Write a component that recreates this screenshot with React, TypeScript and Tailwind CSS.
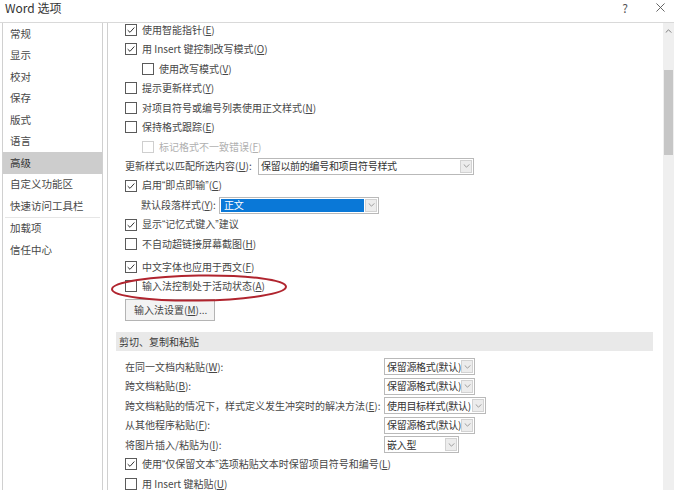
import type { ReactNode } from "react";

const font = {
  fontFamily: '"Noto Sans CJK SC", "Noto Sans", "Liberation Sans", sans-serif',
};

function Key({ k }: { k: string }) {
  return (
    <>
      (<span className="underline underline-offset-1">{k}</span>)
    </>
  );
}

// narrow western quotes, as Word draws them
function Q({ children }: { children: string }) {
  return <span className="font-['Liberation_Sans',sans-serif]">{children}</span>;
}

function Box({ checked, disabled }: { checked?: boolean; disabled?: boolean }) {
  return (
    <span
      className={`flex h-[12px] w-[12px] shrink-0 items-center justify-center border bg-white ${
        disabled ? "border-[#cfcfcf]" : "border-[#5a5a5a]"
      }`}
    >
      {checked && (
        <svg viewBox="0 0 12 12" className="h-[10px] w-[10px]">
          <path d="M2 6.2 L4.8 8.8 L10 3" fill="none" stroke="#333" strokeWidth="1.2" />
        </svg>
      )}
    </span>
  );
}

function Check({
  label,
  k,
  checked,
  disabled,
  indent,
}: {
  label: ReactNode;
  k?: string;
  checked?: boolean;
  disabled?: boolean;
  indent?: boolean;
}) {
  return (
    <div
      className={`flex h-[19.5px] items-center gap-[5px] whitespace-nowrap ${
        indent ? "pl-[34px]" : "pl-[17px]"
      } ${disabled ? "text-[#b0b0b0]" : ""}`}
    >
      <Box checked={checked} disabled={disabled} />
      <span>
        {label}
        {k && <Key k={k} />}
      </span>
    </div>
  );
}

function Select({
  value,
  width,
  highlight,
}: {
  value: string;
  width: string;
  highlight?: boolean;
}) {
  return (
    <div
      className={`flex h-[17px] shrink-0 items-stretch border border-[#b9b9b9] bg-white p-[1px] ${width}`}
    >
      <span
        className={`flex min-w-0 flex-1 items-center whitespace-nowrap pl-[1px] tracking-[-0.3px] ${
          highlight ? "bg-[#0a78d7] pl-[3px] text-white" : "text-[#333]"
        }`}
      >
        {value}
      </span>
      <span className="ml-[1px] flex w-[12px] shrink-0 items-center justify-center border border-[#d2d2d2] bg-[#ececec]">
        <svg viewBox="0 0 8 5" className="h-[4px] w-[7px]">
          <path d="M0.5 0.5 L4 4 L7.5 0.5" fill="none" stroke="#888" strokeWidth="1" />
        </svg>
      </span>
    </div>
  );
}

function PasteRow({
  label,
  k,
  value,
  width,
}: {
  label: string;
  k: string;
  value: string;
  width: string;
}) {
  return (
    <div className="flex h-[19.5px] items-center whitespace-nowrap pl-[17px]">
      <span className="w-[259px] shrink-0">
        {label}
        <Key k={k} />:
      </span>
      <Select value={value} width={width} />
    </div>
  );
}

const navItems = [
  "常规",
  "显示",
  "校对",
  "保存",
  "版式",
  "语言",
  "高级",
  "自定义功能区",
  "快速访问工具栏",
  "加载项",
  "信任中心",
];

export default function App() {
  return (
    <div
      className="relative h-[490px] w-[674px] overflow-hidden bg-white text-[10px] leading-none text-[#474747]"
      style={font}
    >
      <div className="flex h-[23px] items-start justify-between border-b border-[#d9d9d9] pl-[5px] pt-[1px]">
        <span className="text-[12px] leading-[13px] text-[#333]">Word 选项</span>
        <div className="flex items-start gap-[28px] pr-[9px] text-[12px] leading-[13px] text-[#555]">
          <span>?</span>
          <svg viewBox="0 0 10 10" className="mt-[2px] h-[9px] w-[9px]">
            <path d="M0.5 0.5 L9.5 9.5 M9.5 0.5 L0.5 9.5" stroke="#555" strokeWidth="1" />
          </svg>
        </div>
      </div>

      <div className="flex h-[467px]">
        <nav className="ml-[2px] w-[101px] shrink-0 border-x border-[#d0d0d0] text-[10.5px]">
          {navItems.map((item) => (
            <div key={item}>
              <div
                className={`flex h-[21.5px] items-center pl-[7px] ${
                  item === "高级" ? "bg-[#cdcdcd] text-[#333]" : ""
                }`}
              >
                {item}
              </div>
              {item === "快速访问工具栏" && <div className="mx-[2px] border-t border-[#e6e6e6]" />}
            </div>
          ))}
        </nav>

        <main className="ml-[4px] flex-1 overflow-hidden border-l border-[#d0d0d0]">
          <div className="-mt-[3px]">
            <Check label="使用智能指针" k="E" checked />
            <Check label="用 Insert 键控制改写模式" k="O" checked />
            <Check label="使用改写模式" k="V" indent />
            <Check label="提示更新样式" k="Y" />
            <Check label="对项目符号或编号列表使用正文样式" k="N" />
            <Check label="保持格式跟踪" k="E" />
            <Check label="标记格式不一致错误" k="F" indent disabled />
            <div className="flex h-[19.5px] items-center whitespace-nowrap pl-[17px]">
              <span className="w-[133px] shrink-0">
                更新样式以匹配所选内容<Key k="U" />:
              </span>
              <Select value="保留以前的编号和项目符号样式" width="w-[216px]" />
            </div>
            <Check
              label={
                <>
                  启用<Q>“</Q>即点即输<Q>”</Q>
                </>
              }
              k="C"
              checked
            />
            <div className="flex h-[19.5px] items-center whitespace-nowrap pl-[33px]">
              <span className="w-[78px] shrink-0">
                默认段落样式<Key k="Y" />:
              </span>
              <Select value="正文" width="w-[160px]" highlight />
            </div>
            <Check
              label={
                <>
                  显示<Q>“</Q>记忆式键入<Q>”</Q>建议
                </>
              }
              checked
            />
            <Check label="不自动超链接屏幕截图" k="H" />
            <div className="h-[3px]" />
            <Check label="中文字体也应用于西文" k="F" checked />
            <Check label="输入法控制处于活动状态" k="A" />
            <div className="pl-[17px] pt-[3px]">
              <button
                type="button"
                className="flex h-[22px] w-[90px] items-center whitespace-nowrap border border-[#b4b4b4] bg-[#f3f3f3] pl-[8px] text-[#444]"
              >
                输入法设置<Key k="M" />...
              </button>
            </div>
            <div className="ml-[8px] mr-[10px] mt-[11px] flex h-[19px] items-center bg-[#e9e9e9] pl-[3px] text-[#3a3a3a]">
              剪切、复制和粘贴
            </div>
            <div className="h-[6px]" />
            <PasteRow label="在同一文档内粘贴" k="W" value="保留源格式(默认)" width="w-[91px]" />
            <PasteRow label="跨文档粘贴" k="B" value="保留源格式(默认)" width="w-[91px]" />
            <PasteRow
              label="跨文档粘贴的情况下，样式定义发生冲突时的解决方法"
              k="E"
              value="使用目标样式(默认)"
              width="w-[102px]"
            />
            <PasteRow label="从其他程序粘贴" k="F" value="保留源格式(默认)" width="w-[91px]" />
            <PasteRow label="将图片插入/粘贴为" k="I" value="嵌入型" width="w-[75px]" />
            <Check
              label={
                <>
                  使用<Q>“</Q>仅保留文本<Q>”</Q>选项粘贴文本时保留项目符号和编号
                </>
              }
              k="L"
              checked
            />
            <Check label="用 Insert 键粘贴" k="U" />
          </div>
        </main>

        <div className="relative w-[11px] shrink-0 bg-[#efefef]">
          <div className="flex h-[14px] items-center justify-center pt-[2px]">
            <svg viewBox="0 0 8 5" className="h-[4px] w-[7px]">
              <path d="M0.5 4.5 L4 1 L7.5 4.5" fill="none" stroke="#666" strokeWidth="1" />
            </svg>
          </div>
          <div className="mx-[1px] mt-[33px] h-[85px] bg-[#c6c6c6]" />
        </div>
      </div>

      <svg
        className="pointer-events-none absolute left-[108px] top-[272px]"
        width="182"
        height="32"
        viewBox="0 0 182 32"
      >
        <ellipse
          cx="91"
          cy="16"
          rx="87"
          ry="12.5"
          fill="none"
          stroke="#b0242e"
          strokeWidth="2"
          transform="rotate(-0.8 91 16)"
        />
      </svg>
    </div>
  );
}
